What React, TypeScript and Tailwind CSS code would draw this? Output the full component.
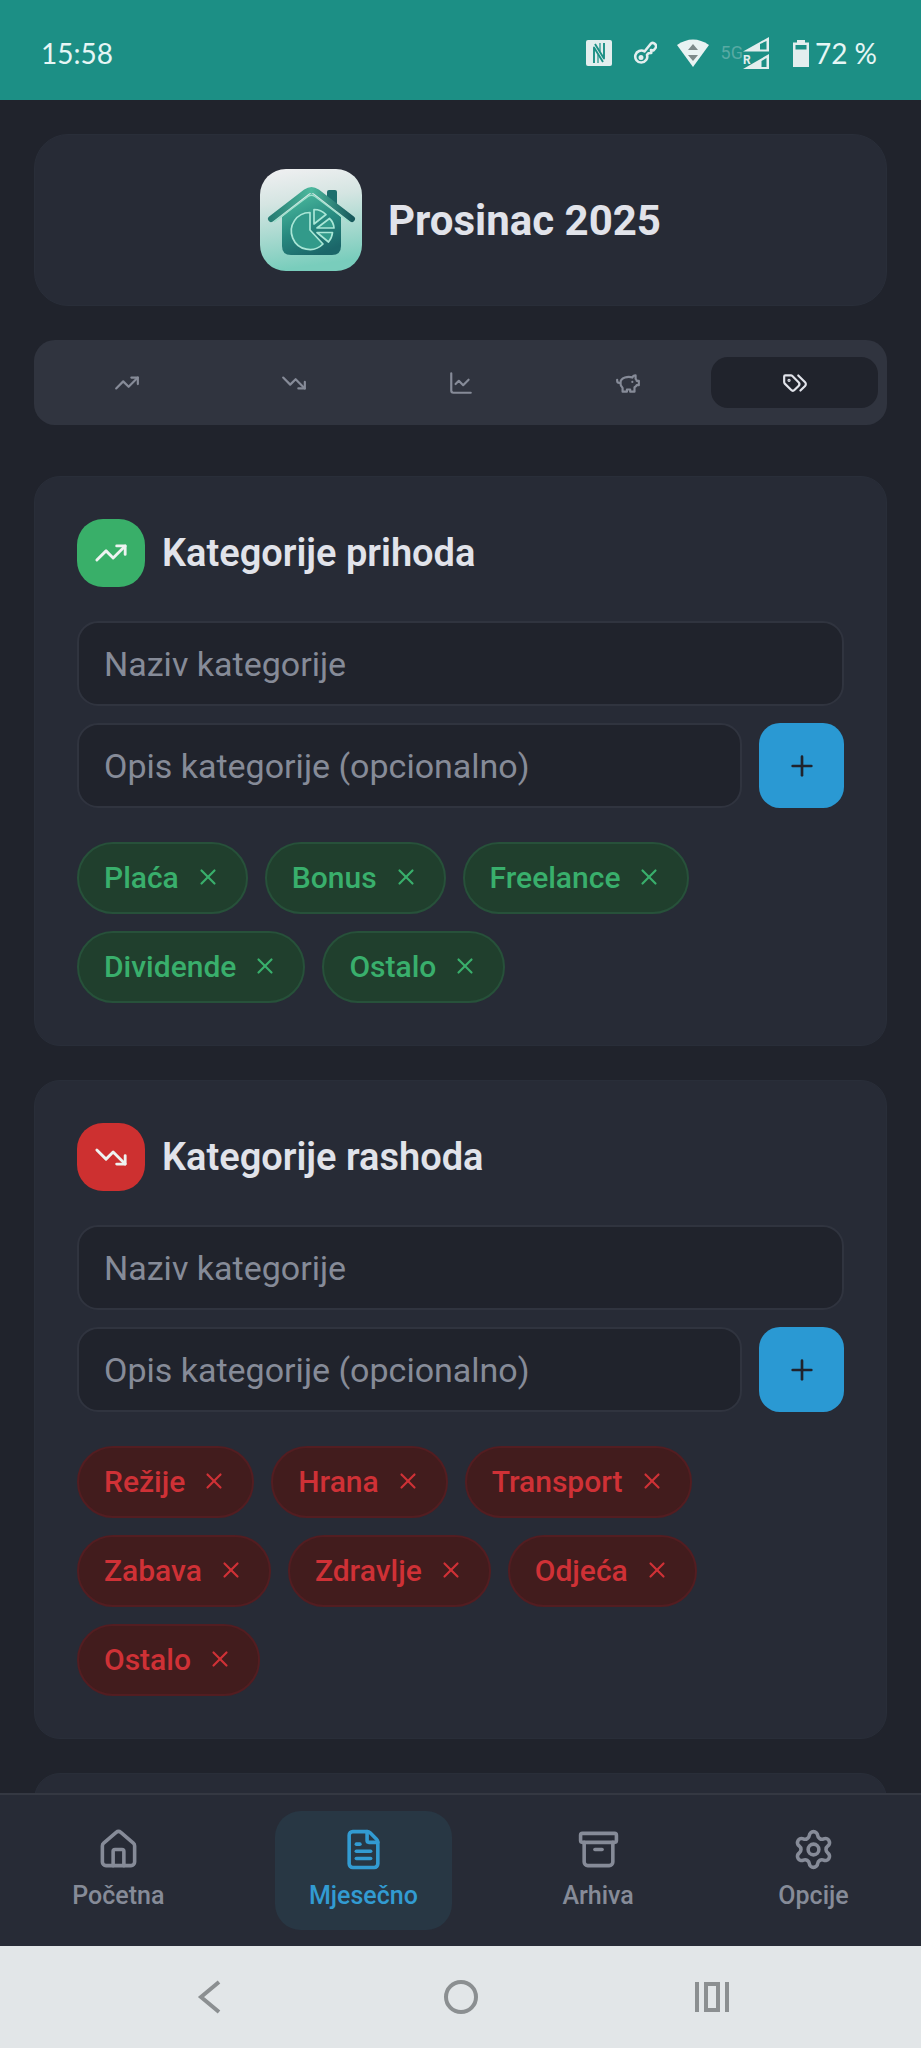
import type { ComponentType, ReactNode } from "react";
import {
  Archive,
  ChartLine,
  FileText,
  House,
  Plus,
  Settings,
  TrendingDown,
  TrendingUp,
  X,
} from "lucide-react";

type Icon = ComponentType<{ className?: string }>;
type Tone = "income" | "expense";

const TagsIcon: Icon = ({ className }) => (
  <svg
    viewBox="0 0 24 24"
    className={className}
    fill="none"
    stroke="currentColor"
    strokeWidth="2"
    strokeLinecap="round"
    strokeLinejoin="round"
  >
    <path d="m15 5 6.3 6.3a2.400 2.400 0 0 1 0 3.400L17 19" />
    <path d="M9.586 5.586A2 2 0 0 0 8.172 5H3a1 1 0 0 0-1 1v5.172a2 2 0 0 0 .586 1.414L8.290 18.290a2.426 2.426 0 0 0 3.420 0l3.580-3.580a2.426 2.426 0 0 0 0-3.420z" />
    <circle cx="6.500" cy="9.500" r=".5" fill="currentColor" />
  </svg>
);

const PiggyIcon: Icon = ({ className }) => (
  <svg
    viewBox="0 0 24 24"
    className={className}
    fill="none"
    stroke="currentColor"
    strokeWidth="2"
    strokeLinecap="round"
    strokeLinejoin="round"
  >
    <path d="M19 5c-1.500 0-2.800 1.400-3 2-3.500-1.500-11-.3-11 5 0 1.800 0 3 2 4.500V20h4v-2h3v2h4v-4c1-.5 1.700-1 2-2h2v-4h-2c0-1-.5-1.500-1-2V5z" />
    <path d="M2 9v1c0 1.100.9 2 2 2h1" />
    <path d="M16 11h.01" />
  </svg>
);

const tabs: { id: string; label: string; icon: Icon }[] = [
  { id: "income", label: "Prihodi", icon: TrendingUp },
  { id: "expense", label: "Rashodi", icon: TrendingDown },
  { id: "stats", label: "Statistika", icon: ChartLine },
  { id: "savings", label: "Štednja", icon: PiggyIcon },
  { id: "categories", label: "Kategorije", icon: TagsIcon },
];

const navItems: { label: string; icon: Icon }[] = [
  { label: "Početna", icon: House },
  { label: "Mjesečno", icon: FileText },
  { label: "Arhiva", icon: Archive },
  { label: "Opcije", icon: Settings },
];

const toneStyles: Record<Tone, { badge: string; chip: string }> = {
  income: {
    badge: "bg-[#39af69]",
    chip: "border-[#27513a] bg-[#203f2d] text-[#39af6c]",
  },
  expense: {
    badge: "bg-[#cd3030]",
    chip: "border-[#531d21] bg-[#421c1d] text-[#cf3136]",
  },
};

const StatusBar = () => (
  <div className="flex h-[100px] shrink-0 items-center justify-between bg-[#1c8f85] pt-1.5 pr-11 pl-[41px] font-['Lato',sans-serif] text-[28px] text-[#e6f6f5]">
    <span>15:58</span>
    <div className="flex items-center">
      {/* NFC */}
      <svg viewBox="0 0 26 26" className="mr-[21px] size-[26px]">
        <rect width="26" height="26" rx="2" fill="#e3eeee" />
        <path
          d="M8 23V7.500L17 22M18 3V18.500L9 4"
          fill="none"
          stroke="#1c8f85"
          strokeWidth="1.900"
          strokeLinejoin="round"
        />
        <path d="M12 14.500V23M14 3V11.500" stroke="#1c8f85" strokeWidth="1.200" />
      </svg>
      {/* VPN key */}
      <svg viewBox="0 0 24 24" className="mr-5 size-6" fill="none" stroke="#e3eeee" strokeWidth="2.600" strokeLinejoin="round">
        <path d="M11.500 10.500 18 2.500q2-1.500 4 .5t.5 4l-2 2.500-2.500-.5.3 3-3 .3-1.300 1.500a6 6 0 1 1-2.500-3.300Z" />
        <circle cx="8" cy="16.500" r="1.200" />
      </svg>
      {/* Wi-Fi */}
      <svg viewBox="0 0 32 28" className="mr-3 h-7 w-8">
        <path d="M0 6Q16-5 32 6L16 28Z" fill="#e9f3f3" />
        <path d="M11 11h10l-5-6ZM11 16h10l-5 6Z" fill="#7d8a8a" />
      </svg>
      <span className="font-['Roboto',sans-serif] text-lg text-[#58aaa3]">5G</span>
      {/* Dual SIM signal */}
      <svg viewBox="0 0 26 32" className="mr-6 h-8 w-[26px]">
        <path d="M0 14.500 26 0V14.500Z" fill="#e3eeee" />
        <path d="M17 7 23.500 4V12.500H17Z" fill="#1c8f85" />
        <path d="M0 32 26 17V32Z" fill="#e3eeee" />
        <path d="M18.500 24 23.500 21V30H18.500Z" fill="#1c8f85" />
        <text x="0" y="27" fontSize="12" fontWeight="700" fontFamily="Roboto, sans-serif" fill="#e3eeee">
          R
        </text>
      </svg>
      {/* Battery */}
      <svg viewBox="0 0 16 27" className="mr-1.5 h-[27px] w-4">
        <path d="M4 0h8v2.500h4V27H0V2.500h4Z" fill="#e3eeee" />
        <path d="M2.500 5h11v4.500h-11Z" fill="#1c8f85" />
      </svg>
      <span>72 %</span>
    </div>
  </div>
);

const Logo = () => (
  <svg viewBox="0 0 102 102" className="size-[102px] rounded-[26px]">
    <defs>
      <linearGradient id="logo-bg" x1="0" y1="0" x2="0.150" y2="1">
        <stop offset="0" stopColor="#f1f0f2" />
        <stop offset="0.350" stopColor="#d5e5e2" />
        <stop offset="1" stopColor="#79cdbc" />
      </linearGradient>
      <linearGradient id="logo-house" x1="0.200" y1="0" x2="0.600" y2="1">
        <stop offset="0" stopColor="#4cbb9f" />
        <stop offset="0.550" stopColor="#27897f" />
        <stop offset="1" stopColor="#1b6669" />
      </linearGradient>
      <linearGradient id="logo-roof" x1="0" y1="0" x2="1" y2="0">
        <stop offset="0" stopColor="#277d73" />
        <stop offset="0.500" stopColor="#4db99e" />
        <stop offset="1" stopColor="#17595c" />
      </linearGradient>
    </defs>
    <rect width="102" height="102" fill="url(#logo-bg)" />
    <path d="M67 23q0-2 2-2h6q2 0 2 2v19L67 34Z" fill="#1d6e6d" />
    <path d="M51.500 24 81 48V77q0 9-9 9H31q-9 0-9-9V48Z" fill="url(#logo-house)" />
    <path
      d="M11 50 46 23q5.500-4 11 0L92 50"
      fill="none"
      stroke="url(#logo-roof)"
      strokeWidth="6"
      strokeLinecap="round"
    />
    <path d="M14 53 48 27.500q3.500-2.500 7 0L89 53" fill="none" stroke="#9fe0cd" strokeWidth="1.400" />
    <g fill="#329a8a" stroke="#a9e6d6" strokeWidth="1.700" strokeLinejoin="round">
      <path d="M50 43.500V61L63 75A18.500 18.500 0 1 1 50 43.500Z" />
      <path d="M54 40.500V55L66 45.500Q61 40.500 54 40.500Z" />
      <path d="M69.500 49.500 57 59H74Q73.500 53 69.500 49.500Z" />
      <path d="M57 63.500H72.500Q72 69 68.500 73Z" />
    </g>
  </svg>
);

const Card = ({ children }: { children?: ReactNode }) => (
  <section className="rounded-[26px] border border-[#292e39] bg-[#272b36] p-[42px]">{children}</section>
);

interface CategoryCardProps {
  id: string;
  title: string;
  icon: Icon;
  tone: Tone;
  categories: string[];
}

const inputClass =
  "h-[85px] w-full min-w-0 rounded-[21px] border-2 border-[#30343f] bg-[#20232c] px-[25px] text-[34px] text-[#e1e3ea] placeholder:text-[#868b98] outline-none";

const CategoryCard = ({ id, title, icon: TitleIcon, tone, categories }: CategoryCardProps) => {
  const styles = toneStyles[tone];

  return (
    <Card>
      <div className="mb-[34px] flex items-center gap-[17px]">
        <div className={`flex size-[68px] items-center justify-center rounded-[26px] text-[#eef3f1] ${styles.badge}`}>
          <TitleIcon className="size-[34px]" />
        </div>
        <h2 className="text-[38px] font-semibold text-[#e1e3ea]">{title}</h2>
      </div>

      <form className="flex flex-col gap-[17px]">
        <input id={`${id}-name`} aria-label="Naziv kategorije" placeholder="Naziv kategorije" className={inputClass} />
        <div className="flex gap-[17px]">
          <input
            id={`${id}-description`}
            aria-label="Opis kategorije (opcionalno)"
            placeholder="Opis kategorije (opcionalno)"
            className={inputClass}
          />
          <button
            type="button"
            aria-label="Dodaj"
            className="flex size-[85px] shrink-0 items-center justify-center rounded-[21px] bg-[#2a99d3] text-[#20232c]"
          >
            <Plus className="size-8" />
          </button>
        </div>
      </form>

      <ul className="mt-[34px] flex flex-wrap gap-[17px]">
        {categories.map((name) => (
          <li
            key={name}
            className={`flex h-[72px] items-center gap-4 rounded-full border-2 px-[25px] pb-0.5 text-[30px] font-medium ${styles.chip}`}
          >
            {name}
            <button type="button" aria-label={`Ukloni ${name}`}>
              <X className="size-[26px]" />
            </button>
          </li>
        ))}
      </ul>
    </Card>
  );
};

const BottomNav = () => (
  <nav className="flex shrink-0 justify-around border-t-2 border-[#343842] bg-[#272b36] py-4">
    {navItems.map(({ label, icon: NavIcon }) => (
      <a
        key={label}
        href="#"
        className={`flex flex-col items-center gap-2 rounded-[26px] px-[34px] py-[17px] text-[25px] leading-[34px] font-medium ${
          label === "Mjesečno" ? "bg-[#283744] text-[#329bd2]" : "text-[#868b98]"
        }`}
      >
        <NavIcon className="size-[43px]" />
        {label}
      </a>
    ))}
  </nav>
);

const SystemNav = () => (
  <div className="flex h-[102px] shrink-0 items-center justify-around bg-[#e2e6e8] px-[84px] text-[#8b8f91]">
    <button type="button" aria-label="Natrag">
      <svg viewBox="0 0 36 36" className="size-9" fill="none" stroke="currentColor" strokeWidth="4">
        <path d="M27 3 9 18 27 33" />
      </svg>
    </button>
    <button type="button" aria-label="Početni zaslon">
      <svg viewBox="0 0 36 36" className="size-9" fill="none" stroke="currentColor" strokeWidth="4">
        <circle cx="18" cy="18" r="15" />
      </svg>
    </button>
    <button type="button" aria-label="Nedavne aplikacije">
      <svg viewBox="0 0 36 36" className="size-9" fill="none" stroke="currentColor" strokeWidth="4">
        <path d="M3 3V33M33 3V33M12 5H24V31H12Z" />
      </svg>
    </button>
  </div>
);

const App = () => {
  return (
    <div className="flex h-screen flex-col overflow-hidden bg-[#20232c] font-['Roboto',sans-serif]">
      <StatusBar />

      <main className="flex min-h-0 flex-1 flex-col overflow-hidden px-[34px] pt-[34px]">
        <header className="mb-[34px] flex shrink-0 items-center justify-center gap-[26px] rounded-[34px] border border-[#292e39] bg-[#272b36] p-[34px]">
          <Logo />
          <h1 className="text-[42px] leading-[51px] font-bold text-[#e1e3ea]">Prosinac 2025</h1>
        </header>

        <div role="tablist" className="mb-[51px] flex h-[85px] shrink-0 items-center rounded-[21px] bg-[#30343f] px-[9px]">
          {tabs.map(({ id, label, icon: TabIcon }) => (
            <button
              key={id}
              type="button"
              role="tab"
              aria-label={label}
              aria-selected={id === "categories"}
              className={`flex h-[51px] flex-1 items-center justify-center rounded-[17px] ${
                id === "categories" ? "bg-[#20232c] text-[#e1e3ea]" : "text-[#868b98]"
              }`}
            >
              <TabIcon className="size-[26px]" />
            </button>
          ))}
        </div>

        <div className="flex flex-col gap-[34px]">
          <CategoryCard
            id="income"
            title="Kategorije prihoda"
            icon={TrendingUp}
            tone="income"
            categories={["Plaća", "Bonus", "Freelance", "Dividende", "Ostalo"]}
          />
          <CategoryCard
            id="expense"
            title="Kategorije rashoda"
            icon={TrendingDown}
            tone="expense"
            categories={["Režije", "Hrana", "Transport", "Zabava", "Zdravlje", "Odjeća", "Ostalo"]}
          />
          {/* Next section, scrolled under the bottom navigation */}
          <Card />
        </div>
      </main>

      <BottomNav />
      <SystemNav />
    </div>
  );
};

export default App;
